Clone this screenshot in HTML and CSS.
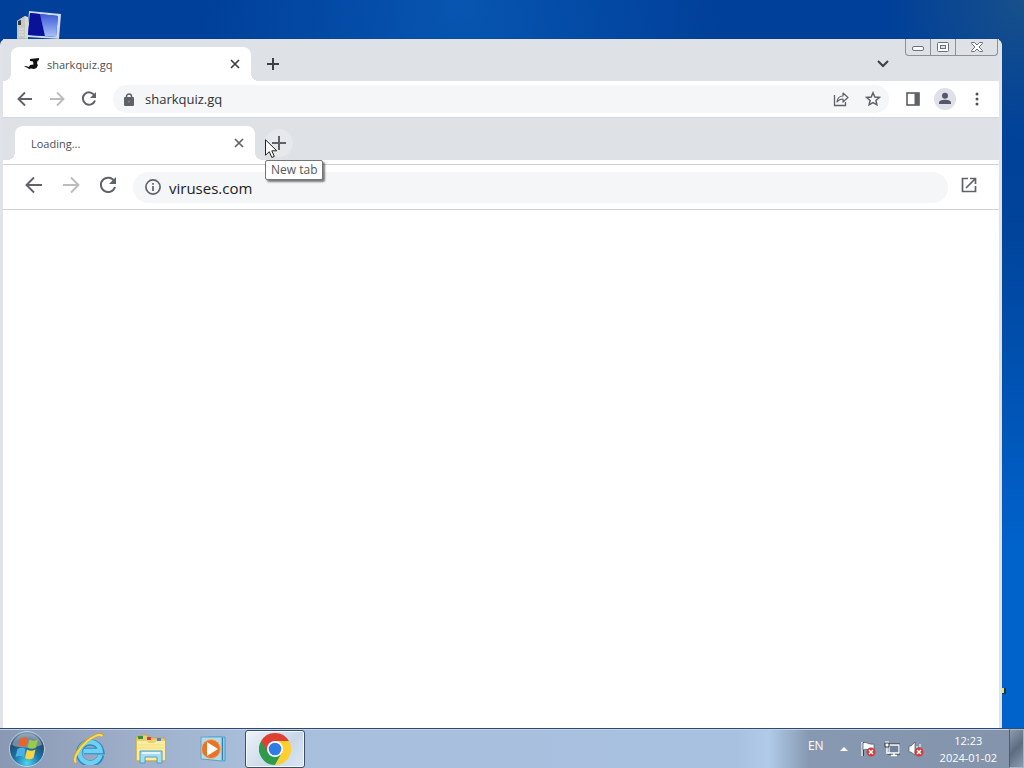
FILE: index.html
```html
<!DOCTYPE html>
<html lang="en">
	<head>
		<meta charset="utf-8">
		<title>sharkquiz.gq</title>
		<link rel="stylesheet" href="styles.css">
	</head>
	<body>
		<div class="desktop">
			<svg class="computer" width="46" height="29" viewBox="0 0 46 29">
				<path d="M1 11L9 6L12 7V29H1Z" fill="#d9dad2"/>
				<path d="M1 11L9 6V29H1Z" fill="#c6c8c2"/>
				<path d="M2 11L5 10V15H2Z" fill="#35383c"/>
				<path d="M3 19h5M3 22h5M3 25h5" stroke="#e4e4de"/>
				<path d="M13 1L45 4L43 29L11 27Z" fill="#cfdbec"/>
				<path d="M14 3L42 6L40 27L12 25Z" fill="#1c2fc0"/>
				<path d="M14 3L24 4L29 26L12 25Z" fill="#0a129a"/>
				<path d="M24 4L42 6L40 27L29 26Z" fill="url(#screen)"/>
				<defs>
					<linearGradient id="screen" x1="0" y1="0" x2="0" y2="1">
						<stop offset="0" stop-color="#3c59d8"/>
						<stop offset="1" stop-color="#a9c2f8"/>
					</linearGradient>
				</defs>
			</svg>

			<div class="window">
				<div class="titlebar">
					<div class="tab">
						<svg class="favicon" width="16" height="16" viewBox="0 0 16 16"><path d="M6 3L15 2V4L13.500 5L13 8L14 9L12.500 12L10 13L7 12.500L5 13L3 11.500L0 10.500L2 10L5 11L6 9L9.500 8.500L9 5.500L6 5Z" fill="#111"/></svg>
						<span class="tab-title">sharkquiz.gq</span>
						<button class="close" aria-label="Close tab"><svg width="10" height="10" viewBox="0 0 10 10"><path d="M1 1L9 9M9 1L1 9" stroke="#3c4043" stroke-width="1.7"/></svg></button>
					</div>
					<button class="round" aria-label="New tab"><svg width="12" height="12" viewBox="0 0 12 12"><path d="M6 0V12M0 6H12" stroke="#3c4043" stroke-width="2"/></svg></button>
					<button class="round search-tabs" aria-label="Search tabs"><svg width="12" height="8" viewBox="0 0 12 8"><path d="M1 1L6 6L11 1" fill="none" stroke="#3c4043" stroke-width="2"/></svg></button>
					<div class="controls">
						<button class="minimize" aria-label="Minimize"><svg width="13" height="6" viewBox="0 0 13 6"><rect x=".5" y=".5" width="11" height="4" rx="1.5" fill="#fff" stroke="#6b717b"/></svg></button>
						<button aria-label="Maximize"><svg width="12" height="10" viewBox="0 0 12 10"><rect x=".5" y=".5" width="11" height="9" rx="1" fill="#fff" stroke="#6b717b"/><rect x="3.500" y="3.500" width="5" height="3" fill="#dee1e6" stroke="#6b717b"/></svg></button>
						<button class="wide" aria-label="Close"><svg width="12" height="10" viewBox="0 0 12 10"><path d="M.5.5H3.500L6 3L8.500.5H11.500V1.500L8 5L11.500 8.500V9.500H8.500L6 7L3.500 9.500H.5V8.500L4 5L.5 1.500Z" fill="#fff" stroke="#6b717b"/></svg></button>
					</div>
				</div>

				<div class="toolbar">
					<button aria-label="Back"><svg width="16" height="16" viewBox="0 0 16 16"><path d="M15 8H2M8 1.500L1.500 8L8 14.500" fill="none" stroke="#5f6368" stroke-width="1.9"/></svg></button>
					<button aria-label="Forward" disabled><svg width="16" height="16" viewBox="0 0 16 16"><path d="M1 8H14M8 1.500L14.500 8L8 14.500" fill="none" stroke="#babcbe" stroke-width="1.9"/></svg></button>
					<button aria-label="Reload"><svg width="16" height="16" viewBox="0 0 16 16"><path d="M13.500 4.500A6.200 6.200 0 1 0 14 9.500" fill="none" stroke="#5f6368" stroke-width="2"/><path d="M15 1V7H9Z" fill="#5f6368"/></svg></button>
					<div class="omnibox">
						<svg width="10" height="13" viewBox="0 0 10 13"><rect y="4" width="10" height="9" rx="1" fill="#5f6368"/><path d="M2.500 5V3.500a2.500 2.500 0 0 1 5 0V5" fill="none" stroke="#5f6368" stroke-width="1.500"/><circle cx="5" cy="8.500" r="1" fill="#85898d"/></svg>
						<input type="text" aria-label="Address" value="sharkquiz.gq">
						<button aria-label="Share"><svg width="16" height="16" viewBox="0 0 16 16"><path d="M1.500 4V14.500H12.500V11" fill="none" stroke="#5f6368" stroke-width="1.300"/><path d="M4 11C4.500 6.500 7 5 10 5V2L15 6.500L10 11V8C7 8 5.500 9 4 11Z" fill="none" stroke="#5f6368" stroke-width="1.200" stroke-linejoin="round"/></svg></button>
						<button aria-label="Bookmark"><svg width="16" height="16" viewBox="0 0 16 16"><path d="M8 1.800L9.800 6L14.300 6.400L10.900 9.400L11.900 13.800L8 11.500L4.100 13.800L5.100 9.400L1.700 6.400L6.200 6Z" fill="none" stroke="#5f6368" stroke-width="1.500"/></svg></button>
					</div>
					<button aria-label="Side panel"><svg width="14" height="14" viewBox="0 0 14 14"><path d="M1 1H13V13H1Z" fill="#fff" stroke="#4f5357" stroke-width="1.500"/><path d="M8.500 1H13V13H8.500Z" fill="#5f6368"/></svg></button>
					<button aria-label="Profile"><svg width="22" height="22" viewBox="0 0 22 22"><circle cx="11" cy="11" r="11" fill="#dfe0e9"/><circle cx="11" cy="7.800" r="3" fill="#54586a"/><path d="M5 16V14.500C5 12.500 9 11.800 11 11.800S17 12.500 17 14.500V16Z" fill="#54586a"/></svg></button>
					<button aria-label="Menu"><svg width="4" height="14" viewBox="0 0 4 14" fill="#4f5357"><circle cx="2" cy="2" r="1.500"/><circle cx="2" cy="7" r="1.500"/><circle cx="2" cy="12" r="1.500"/></svg></button>
				</div>

				<div class="page">
					<div class="titlebar inner">
						<div class="tab">
							<span class="tab-title">Loading...</span>
							<button class="close" aria-label="Close tab"><svg width="10" height="10" viewBox="0 0 10 10"><path d="M1 1L9 9M9 1L1 9" stroke="#5f6368" stroke-width="1.700"/></svg></button>
						</div>
						<div class="new-tab">
							<button class="round hover" aria-label="New tab" aria-describedby="tip"><svg width="14" height="14" viewBox="0 0 14 14"><path d="M7 0V14M0 7H14" stroke="#5f6368" stroke-width="2"/></svg></button>
							<svg class="cursor" width="13" height="20" viewBox="0 0 13 20"><path d="M.5.800V16.200L4.300 12.700L6.800 18.500L9.300 17.400L6.800 11.800H11.800Z" fill="#fff" stroke="#222"/></svg>
							<span class="tooltip" id="tip" role="tooltip">New tab</span>
						</div>
					</div>
					<div class="toolbar inner">
						<button aria-label="Back"><svg width="18" height="18" viewBox="0 0 18 18"><path d="M17 9H2M9 1.500L1.500 9L9 16.500" fill="none" stroke="#5f6368" stroke-width="1.900"/></svg></button>
						<button aria-label="Forward" disabled><svg width="18" height="18" viewBox="0 0 18 18"><path d="M1 9H16M9 1.500L16.500 9L9 16.500" fill="none" stroke="#babcbe" stroke-width="1.900"/></svg></button>
						<button aria-label="Reload"><svg width="18" height="18" viewBox="0 0 18 18"><path d="M15.500 5.500A7.200 7.200 0 1 0 16 11" fill="none" stroke="#5f6368" stroke-width="2"/><path d="M17 1V8H10Z" fill="#5f6368"/></svg></button>
						<div class="omnibox">
							<svg width="16" height="16" viewBox="0 0 16 16"><circle cx="8" cy="8" r="7.100" fill="none" stroke="#5f6368" stroke-width="1.700"/><path d="M8 7V12M8 4V5.700" stroke="#5f6368" stroke-width="1.700"/></svg>
							<input type="text" aria-label="Site address" value="viruses.com">
						</div>
						<button aria-label="Open in new window"><svg width="16" height="16" viewBox="0 0 16 16"><path d="M7 1.500H1.500V14.500H14.500V9" fill="none" stroke="#5f6368" stroke-width="1.700"/><path d="M9 1.500H14.500V7M14.500 1.500L5 11" fill="none" stroke="#5f6368" stroke-width="1.700"/></svg></button>
					</div>
				</div>
			</div>

			<svg class="peek" width="4" height="7" viewBox="0 0 4 7"><path d="M0 0H2V6H0Z" fill="#dcd98a"/><path d="M2 0H4V6H0V5H2Z" fill="#173a39"/></svg>
		</div>

		<div class="taskbar">
			<button class="start" aria-label="Start">
				<svg width="38" height="38" viewBox="0 0 38 38">
					<defs>
						<radialGradient id="orb" cx=".5" cy=".9" r=".9">
							<stop offset="0" stop-color="#4fd4f0"/>
							<stop offset=".4" stop-color="#1b76ac"/>
							<stop offset=".75" stop-color="#25496c"/>
							<stop offset="1" stop-color="#8fa8bc"/>
						</radialGradient>
					</defs>
					<circle cx="19" cy="19" r="17.500" fill="url(#orb)" stroke="#bed0e2"/>
					<path d="M4 15A15.500 15.500 0 0 1 34 15C27 18 12 19 4 15Z" fill="#b9cad8" opacity=".5"/>
					<path d="M12 9Q16 6 20 8.500L18 17Q14 15 10 17Z" fill="#e8642c"/>
					<path d="M21.500 9.500Q26 12 30 9.500L28 17.500Q24 20 19.500 17.500Z" fill="#9bc94a"/>
					<path d="M9.500 19Q14 16.500 17.500 19L16 27Q12 25 7.500 27Z" fill="#4bb1e5"/>
					<path d="M19 19.500Q23 22 27.500 19.500L25.500 28Q21 30.500 17 28Z" fill="#fad441"/>
				</svg>
			</button>
			<button class="task" aria-label="Internet Explorer">
				<svg width="32" height="32" viewBox="0 0 32 32">
					<path d="M28 22A11 10.500 0 1 1 28 18H11" fill="none" stroke="#258cc4" stroke-width="6.500"/>
					<path d="M27.300 22A10.500 10.500 0 1 1 27.500 18H11" fill="none" stroke="#6fd0f3" stroke-width="4.500"/>
					<path d="M3 30C-2 27 6 14 15 7C22 2 28 0 30 3" fill="none" stroke="#d99c1b" stroke-width="3"/>
					<path d="M3 29.500C-1 26 7 14 15 7.500C22 2.500 27 1 29.500 3" fill="none" stroke="#fbdc57" stroke-width="2"/>
				</svg>
			</button>
			<button class="task" aria-label="Windows Explorer">
				<svg width="32" height="30" viewBox="0 0 32 30">
					<path d="M1 3H7V1H13V4H30V27H1Z" fill="#e9cf74" stroke="#c5a64d"/>
					<path d="M3 2H8V5H3Z" fill="#35923b"/>
					<path d="M12 3H16V6H12Z" fill="#cf432b"/>
					<path d="M22 4H26V8H22Z" fill="#4d87bd"/>
					<path d="M2 7H12L14 9H19L21 7H30V26H2Z" fill="#fbec9f"/>
					<path d="M3 11H29M3 14H29" stroke="#f5dd80"/>
					<path d="M5 17H27V29H22V23H10V29H5Z" fill="#a7dbf0" stroke="#4ba0c4"/>
					<path d="M7 19H25" stroke="#e1f5fb" stroke-width="2"/>
				</svg>
			</button>
			<button class="task" aria-label="Media Player">
				<svg width="26" height="26" viewBox="0 0 26 26">
					<path d="M8 1H25V25L8 23Z" fill="#8fcdea" stroke="#4e9cc5"/>
					<path d="M1 1H22V25L1 23Z" fill="#b0dcef" stroke="#5ca4c8"/>
					<path d="M22.500 2V24" stroke="#327dab"/>
					<circle cx="11" cy="13" r="9.500" fill="#e87526" stroke="#f6b17b"/>
					<path d="M7 6L18 13L7 20Z" fill="#fff"/>
				</svg>
			</button>
			<button class="task active" aria-label="Chrome">
				<svg width="32" height="32" viewBox="0 0 32 32">
					<path d="M16 16L2.140 8A16 16 0 0 1 29.860 8Z" fill="#df4034"/>
					<path d="M16 16L2.140 8A16 16 0 0 0 16 32L22.900 20Z" fill="#2e9b4c"/>
					<path d="M16 16V8H29.860A16 16 0 0 1 16 32L22.900 20Z" fill="#fdd02f"/>
					<path d="M2.140 8L9.100 20L16 16V8Z" fill="#df4034"/>
					<path d="M2.140 8L9.100 20L16 24L11 28Z" fill="#2e9b4c"/>
					<circle cx="16" cy="16" r="8" fill="#fff"/>
					<circle cx="16" cy="16" r="6.300" fill="#2f7be8"/>
				</svg>
			</button>

			<div class="tray">
				<span class="lang">EN</span>
				<button aria-label="Show hidden icons"><svg width="8" height="4" viewBox="0 0 8 4"><path d="M0 4L4 0L8 4Z" fill="#fff"/></svg></button>
				<button aria-label="Action Center"><svg width="16" height="16" viewBox="0 0 16 16"><path d="M2.500 1V15" stroke="#39424e" stroke-width="3"/><path d="M2 1V15" stroke="#fff" stroke-width="1.500"/><path d="M3 2C6 0 8 4 14 3V9C9 10 7 7 3 9Z" fill="#fff" stroke="#465262" stroke-width=".7"/><circle cx="11" cy="11" r="4.500" fill="#d43c37"/><path d="M9 9L13 13M13 9L9 13" stroke="#fff" stroke-width="1.500"/></svg></button>
				<button aria-label="Network"><svg width="16" height="16" viewBox="0 0 16 16"><path d="M5 4H15V12H5Z" fill="#718197" stroke="#29323e" stroke-width="3"/><path d="M5 4H15V12H5Z" fill="#718197" stroke="#fff" stroke-width="1.300"/><path d="M7 14.500H13M10 12V14M3 6V12H5" fill="none" stroke="#fff" stroke-width="1.500"/><path d="M1 2H5V6H1Z" fill="#fff" stroke="#29323e"/><path d="M2 0V2M4 0V2" stroke="#fff"/></svg></button>
				<button aria-label="Volume"><svg width="16" height="16" viewBox="0 0 16 16"><path d="M1 5H3L7 1V14L3 11H1Z" fill="#fff" stroke="#596679" stroke-width=".8"/><path d="M9 5V7M12 3V6" stroke="#fff"/><circle cx="11" cy="11" r="4.500" fill="#d43c37"/><path d="M9 9L13 13M13 9L9 13" stroke="#fff" stroke-width="1.500"/></svg></button>
				<div class="clock">
					<span>12:23</span>
					<span>2024-01-02</span>
				</div>
				<button class="show-desktop" aria-label="Show desktop"></button>
			</div>
		</div>
	</body>
</html>
```

FILE: styles.css
```css
* {
	box-sizing: border-box;
	margin: 0; padding: 0;
}

body {
	display: flex;
	flex-direction: column;
	height: 100vh;
	overflow: hidden;
	font-family: "Open Sans", sans-serif;
	font-size: 12px;
}

svg {
	display: block;
	flex: none;
}

button {
	display: flex;
	align-items: center;
	justify-content: center;
	flex: none;
	border: none;
	background: transparent;
}

input {
	flex: 1;
	min-width: 0;
	border: none;
	outline: none;
	background: transparent;
	font-family: inherit;
	color: #303236;
}

.desktop {
	position: relative;
	display: flex;
	flex-direction: column;
	flex: 1;
	min-height: 0;
	padding: 10px 22px 0 0;
	background:
		radial-gradient(circle at 100% 0, #17508a 0, rgba(23, 80, 138, 0) 140px),
		radial-gradient(ellipse at 45% 0, rgba(8, 91, 181, 0.8) 0, rgba(8, 91, 181, 0) 260px),
		linear-gradient(#003f9a, #00439a 30%, #0062cb 75%);
}

.computer {
	margin-left: 16px;
}

.peek {
	position: absolute;
	right: 18px;
	bottom: 33px;
}

/* window */

.window {
	display: flex;
	flex-direction: column;
	flex: 1;
	min-height: 0;
	padding: 0 3px;
	background: #e0e4ea;
	border-radius: 6px 6px 0 0;
	box-shadow: 0 0 1px #16335c;
}

.titlebar {
	display: flex;
	align-items: flex-end;
	height: 42px;
	padding-left: 8px;
	background: #dee1e6;
}

.tab {
	position: relative;
	display: flex;
	align-items: center;
	width: 240px;
	height: 34px;
	padding: 0 8px 0 13px;
	background: #fff;
	border-radius: 8px 8px 0 0;
	color: #4c5055;
}

/* flared feet on both sides of the tab */
.tab::before, .tab::after {
	content: "";
	position: absolute;
	bottom: 0;
	width: 8px;
	height: 8px;
}

.tab::before {
	right: 100%;
	background: radial-gradient(circle at 0 0, #dee1e6 8px, #fff 8px);
}

.tab::after {
	left: 100%;
	background: radial-gradient(circle at 100% 0, #dee1e6 8px, #fff 8px);
}

.tab-title {
	flex: 1;
	margin-left: 7px;
	font-size: 11px;
}

.close {
	width: 16px;
	height: 16px;
}

.round {
	width: 28px;
	height: 28px;
	margin: 0 0 3px 8px;
	border-radius: 50%;
}

.round.search-tabs {
	margin-left: auto;
	margin-right: 8px;
}

.controls {
	display: flex;
	align-self: flex-start;
	height: 17px;
	margin-right: 1px;
	border: 1px solid #8b9099;
	border-top: none;
	border-radius: 0 0 4px 4px;
}

.controls button {
	width: 25px;
	border-right: 1px solid #8b9099;
}

.controls .minimize {
	align-items: flex-end;
	padding-bottom: 3px;
}

.controls .wide {
	width: 41px;
	border-right: none;
}

.toolbar {
	display: flex;
	align-items: center;
	height: 36px;
	padding: 0 6px;
	background: #fff;
}

.toolbar button {
	width: 32px;
	height: 28px;
}

.omnibox {
	display: flex;
	align-items: center;
	flex: 1;
	height: 28px;
	margin: 0 8px;
	padding-left: 11px;
	background: #f4f6f7;
	border-radius: 14px;
}

.omnibox input {
	margin-left: 11px;
	font-size: 13px;
}

/* page inside the window */

.page {
	flex: 1;
	min-height: 0;
	background: #fff;
	border-top: 1px solid #d4d7db;
}

.titlebar.inner {
	padding-left: 12px;
}

.inner .tab {
	padding-left: 9px;
}

.new-tab {
	position: relative;
}

.new-tab .round {
	margin-left: 10px;
}

.hover {
	background: #e6e8eb;
}

.cursor {
	position: absolute;
	left: 10px;
	top: 10px;
}

.tooltip {
	position: absolute;
	left: 10px;
	top: 31px;
	padding: 0 5px;
	border: 1px solid #767676;
	border-radius: 2px;
	background: #fff;
	box-shadow: 2px 2px 2px rgba(0, 0, 0, 0.5);
	color: #575757;
	line-height: 18px;
	white-space: nowrap;
}

.toolbar.inner {
	height: 46px;
	margin-top: 4px;
	padding: 0 12px;
	border-top: 1px solid #cfd1d4;
	border-bottom: 1px solid #cfd1d4;
}

.inner button {
	padding-bottom: 4px;
}

.titlebar.inner button {
	padding-bottom: 0;
}

.toolbar.inner button {
	width: 37px;
}

.inner .omnibox {
	height: 31px;
	margin: 0 2px 0 7px;
	padding-left: 12px;
	border-radius: 16px;
}

.inner .omnibox input {
	margin-left: 8px;
	padding-top: 2px;
	font-size: 15px;
	color: #222;
}

/* taskbar */

.taskbar {
	display: flex;
	align-items: center;
	height: 40px;
	padding-left: 8px;
	border-top: 1px solid #304c70;
	background: linear-gradient(90deg, #8998b3 0, #9dadc8 12%, #a8bfdc 25%, #a8c1e0 72%, #b0cbe9 75%, #8799b2 79%, #8293aa 100%);
	box-shadow: inset 0 1px 0 #c6d4e6;
}

.start {
	width: 38px;
	margin-right: 13px;
}

.task {
	width: 60px;
	height: 38px;
	margin-right: 2px;
	border-radius: 3px;
}

.task.active {
	border: 1px solid #3c4e68;
	background: linear-gradient(135deg, #edf3f9, #c8d7e8 60%, #dce7f2);
	box-shadow: inset 0 0 0 1px #f4f8fc;
}

.tray {
	display: flex;
	align-items: center;
	height: 100%;
	margin-left: auto;
	color: #fff;
}

.tray button {
	width: 24px;
}

.lang {
	padding: 0 8px 6px 0;
}

.clock {
	display: flex;
	flex-direction: column;
	align-items: center;
	margin: 0 12px;
	font-size: 11px;
	line-height: 17px;
}

.tray .show-desktop {
	width: 15px;
	height: 100%;
	border: 1px solid #a8b5c6;
	border-left-color: #505d70;
	background: linear-gradient(135deg, #8e9bad, #5e6c80 50%, #8d9bb0);
}
```
